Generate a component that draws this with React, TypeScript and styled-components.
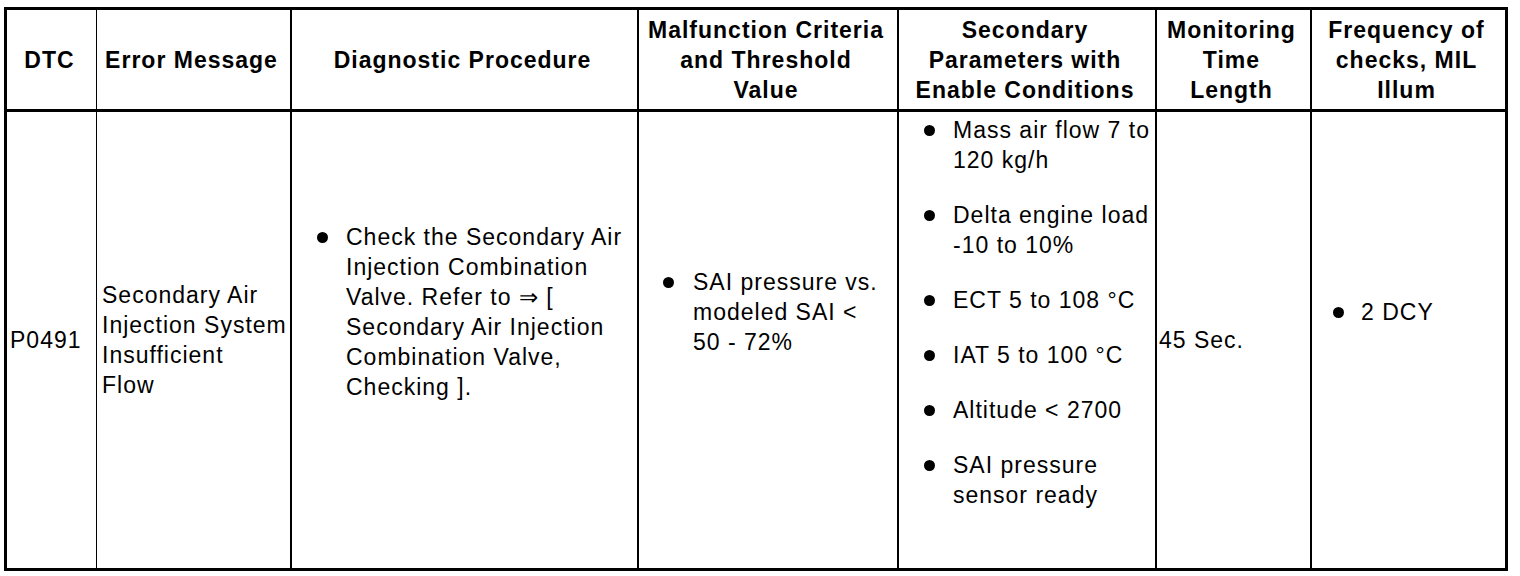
import React from "react";
import styled, { createGlobalStyle } from "styled-components";

const GlobalStyle = createGlobalStyle`
  html, body {
    margin: 0;
    padding: 0;
    background: #ffffff;
  }
  body {
    font-family: "Liberation Sans", Arial, Helvetica, sans-serif;
    color: #000000;
  }
  *, *::before, *::after {
    box-sizing: border-box;
  }
`;

const Page = styled.div`
  padding: 7px 0 0 4px;
`;

const Table = styled.div`
  display: grid;
  grid-template-columns: 90px 195px 347px 260px 258px 155px 193px;
  grid-template-rows: 102px 456px;
  width: fit-content;
  border: 3px solid #000;
  font-size: 23px;
  line-height: 30px;
  letter-spacing: 1px;
`;

const HeadCell = styled.div<{ $rule: number }>`
  display: flex;
  align-items: center;
  justify-content: center;
  padding: 0 4px 0 0;
  text-align: center;
  font-weight: 700;
  border-bottom: 3px solid #000;
  border-right: ${(p) => p.$rule}px solid #000;
`;

const BodyCell = styled.div<{ $rule: number; $pad: number }>`
  display: flex;
  align-items: center;
  padding-left: ${(p) => p.$pad}px;
  border-right: ${(p) => p.$rule}px solid #000;
`;

const Lines = styled.div`
  display: flex;
  flex-direction: column;
`;

const Line = styled.span`
  display: block;
  white-space: nowrap;
`;

const List = styled.ul<{ $indent: number }>`
  list-style: none;
  margin: 0 0 56px 0;
  padding: 0 0 0 ${(p) => p.$indent}px;
  display: flex;
  flex-direction: column;
  gap: 25px;
`;

const Item = styled.li<{ $gap: number }>`
  display: flex;
  align-items: flex-start;
  gap: ${(p) => p.$gap}px;
`;

const Bullet = styled.span`
  flex: 0 0 auto;
  width: 11px;
  height: 11px;
  margin-top: 10px;
  border-radius: 50%;
  background: #000;
`;

type Head = { lines: string[]; rule: number };

const heads: Head[] = [
  { lines: ["DTC"], rule: 1 },
  { lines: ["Error Message"], rule: 2 },
  { lines: ["Diagnostic Procedure"], rule: 2 },
  { lines: ["Malfunction Criteria", "and Threshold", "Value"], rule: 2 },
  { lines: ["Secondary", "Parameters with", "Enable Conditions"], rule: 2 },
  { lines: ["Monitoring", "Time", "Length"], rule: 2 },
  { lines: ["Frequency of", "checks, MIL", "Illum"], rule: 0 },
];

const TextBlock: React.FC<{ lines: string[] }> = ({ lines }) => (
  <Lines>
    {lines.map((l) => (
      <Line key={l}>{l}</Line>
    ))}
  </Lines>
);

const BulletList: React.FC<{ items: string[][]; indent: number; gap: number }> = ({
  items,
  indent,
  gap,
}) => (
  <List $indent={indent}>
    {items.map((lines) => (
      <Item key={lines[0]} $gap={gap}>
        <Bullet />
        <TextBlock lines={lines} />
      </Item>
    ))}
  </List>
);

export default function App() {
  return (
    <>
      <GlobalStyle />
      <Page>
        <Table>
          {heads.map((h) => (
            <HeadCell key={h.lines[0]} $rule={h.rule}>
              <TextBlock lines={h.lines} />
            </HeadCell>
          ))}

          <BodyCell $rule={1} $pad={3}>
            <TextBlock lines={["P0491"]} />
          </BodyCell>

          <BodyCell $rule={2} $pad={5}>
            <TextBlock
              lines={["Secondary Air", "Injection System", "Insufficient", "Flow"]}
            />
          </BodyCell>

          <BodyCell $rule={2} $pad={0}>
            <BulletList
              indent={25}
              gap={18}
              items={[
                [
                  "Check the Secondary Air",
                  "Injection Combination",
                  "Valve. Refer to \u21D2 [",
                  "Secondary Air Injection",
                  "Combination Valve,",
                  "Checking ].",
                ],
              ]}
            />
          </BodyCell>

          <BodyCell $rule={2} $pad={0}>
            <BulletList
              indent={24}
              gap={19}
              items={[["SAI pressure vs.", "modeled SAI <", "50 - 72%"]]}
            />
          </BodyCell>

          <BodyCell $rule={2} $pad={0}>
            <BulletList
              indent={25}
              gap={18}
              items={[
                ["Mass air flow 7 to", "120 kg/h"],
                ["Delta engine load", "-10 to 10%"],
                ["ECT 5 to 108 \u00B0C"],
                ["IAT 5 to 100 \u00B0C"],
                ["Altitude < 2700"],
                ["SAI pressure", "sensor ready"],
              ]}
            />
          </BodyCell>

          <BodyCell $rule={2} $pad={2}>
            <TextBlock lines={["45 Sec."]} />
          </BodyCell>

          <BodyCell $rule={0} $pad={0}>
            <BulletList indent={21} gap={17} items={[["2 DCY"]]} />
          </BodyCell>
        </Table>
      </Page>
    </>
  );
}
